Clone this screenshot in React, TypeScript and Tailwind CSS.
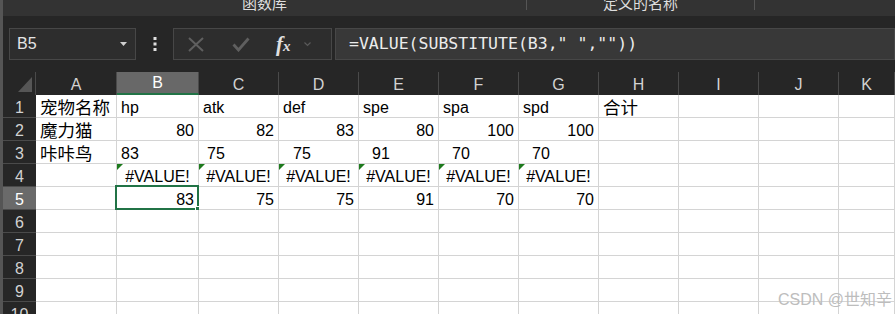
import React from "react";

type Cell = {
  t?: string;
  a?: "l" | "r" | "c";
  cjk?: boolean;
  tri?: boolean;
  sel?: boolean;
  pad?: string;
};

const COLS = ["A", "B", "C", "D", "E", "F", "G", "H", "I", "J", "K"];

const r = (t: string): Cell => ({ t, a: "r" });
const err = (): Cell => ({ t: "#VALUE!", a: "c", tri: true });

const ROWS: Cell[][] = [
  [
    { t: "宠物名称", cjk: true },
    { t: "hp" },
    { t: "atk" },
    { t: "def" },
    { t: "spe" },
    { t: "spa" },
    { t: "spd" },
    { t: "合计", cjk: true },
  ],
  [{ t: "魔力猫", cjk: true }, r("80"), r("82"), r("83"), r("80"), r("100"), r("100")],
  [
    { t: "咔咔鸟", cjk: true },
    { t: "83" },
    { t: "75", pad: "pl-[8px]" },
    { t: "75", pad: "pl-[14px]" },
    { t: "91", pad: "pl-[13px]" },
    { t: "70", pad: "pl-[13px]" },
    { t: "70", pad: "pl-[13px]" },
  ],
  [{}, err(), err(), err(), err(), err(), err()],
  [{}, { t: "83", a: "r", sel: true }, r("75"), r("75"), r("91"), r("70"), r("70")],
  [],
  [],
  [],
  [],
  [],
];

function SheetCell({ c }: { c: Cell }) {
  const justify =
    c.a === "r" ? "justify-end" : c.a === "c" ? "justify-center" : "justify-start";
  return (
    <div
      className={`relative flex items-end ${justify} h-[23px] border-r border-b border-[#d4d4d4] bg-white px-[4px] ${c.pad ?? ""} text-[16px] leading-[18px] text-black whitespace-nowrap`}
    >
      {c.tri && (
        <div className="absolute top-0 left-0 w-0 h-0 border-t-[6px] border-r-[6px] border-t-[#1d7a1d] border-r-transparent" />
      )}
      {c.t && <span className={c.cjk ? "text-[17.5px]" : ""}>{c.t}</span>}
      {c.sel && (
        <>
          <div className="absolute -top-[2px] -left-[2px] -right-[1px] -bottom-[1px] border-2 border-[#217346]" />
          <div className="absolute -right-[4px] -bottom-[4px] w-[7px] h-[7px] bg-[#217346] border border-white" />
        </>
      )}
    </div>
  );
}

export default function App() {
  return (
    <div className="relative w-[895px] h-[314px] overflow-hidden bg-[#262626] border-l-[3px] border-[#555555] font-['Liberation_Sans','Noto_Sans_CJK_SC',sans-serif]">
      {/* ribbon group labels, cut off at the top */}
      <div className="flex h-[16px] bg-[#333333] overflow-hidden text-[15px] text-[#dedede] font-['Noto_Sans_CJK_SC',sans-serif]">
        <div className="w-[523px] flex justify-center">
          <span className="block leading-[15px] -mt-[5px]">函数库</span>
        </div>
        <div className="w-px h-[10px] bg-[#555555]" />
        <div className="w-[227px] flex justify-center">
          <span className="block leading-[15px] -mt-[5px]">定义的名称</span>
        </div>
        <div className="w-px h-[10px] bg-[#555555]" />
      </div>

      {/* formula bar */}
      <div className="flex items-stretch h-[32px] mt-[12px]">
        <div className="ml-[6px] w-[127px] flex items-center justify-between border border-[#474747] bg-[#2d2d2d] pl-[7px] pr-[8px] text-[16px] text-[#e4e4e4]">
          <span>B5</span>
          <svg width="7" height="4" viewBox="0 0 7 4">
            <path d="M0 0h7L3.5 4z" fill="#d0d0d0" />
          </svg>
        </div>
        <div className="w-[37px] flex items-center justify-center">
          <svg width="4" height="14" viewBox="0 0 4 14">
            <rect x="0.5" y="0" width="3" height="3" fill="#e0e0e0" />
            <rect x="0.5" y="5.5" width="3" height="3" fill="#e0e0e0" />
            <rect x="0.5" y="11" width="3" height="3" fill="#e0e0e0" />
          </svg>
        </div>
        <div className="w-[159px] flex items-center border border-[#474747] bg-[#2d2d2d]">
          <svg className="ml-[14px]" width="16" height="15" viewBox="0 0 16 15">
            <path d="M1 1l14 13M15 1L1 14" stroke="#5f5f5f" strokeWidth="2" fill="none" />
          </svg>
          <svg className="ml-[28px]" width="18" height="15" viewBox="0 0 18 15">
            <path d="M1.5 7.5l5 5.5L16.5 1.5" stroke="#5f5f5f" strokeWidth="2.8" fill="none" />
          </svg>
          <span className="ml-[26px] w-[20px] font-['Liberation_Serif',serif] italic font-bold text-[21px] leading-none text-[#e0e0e0]">
            f<span className="text-[15px]">x</span>
          </span>
          <svg className="ml-[8px]" width="7" height="5" viewBox="0 0 7 5">
            <path d="M0.5 0.5l3 3 3-3" stroke="#5a5a5a" strokeWidth="1.2" fill="none" />
          </svg>
        </div>
        <div className="ml-[3px] flex-1 flex items-center border border-[#474747] bg-[#383838] pl-[13px] font-['DejaVu_Sans_Mono',monospace] text-[16.5px] text-[#ececec] whitespace-pre">
          =VALUE(SUBSTITUTE(B3," ",""))
        </div>
      </div>

      {/* sheet */}
      <div className="mt-[12px] grid grid-cols-[33px_81px_82px_80px_80px_80px_80px_80px_80px_80px_80px_56px]">
        <div className="h-[23px] border-r border-[#4a4a4a] flex items-end justify-end pr-[3px] pb-[3px]">
          <svg width="14" height="15" viewBox="0 0 14 15">
            <path d="M14 0v15H0z" fill="#565656" />
          </svg>
        </div>
        {COLS.map((c) => (
          <div
            key={c}
            className={`h-[23px] flex items-end justify-center pb-[1px] border-r border-[#4a4a4a] text-[16px] leading-[18px] ${
              c === "B"
                ? "bg-[#686868] border-b-2 border-b-[#217346] text-white"
                : "bg-[#262626] text-[#d2d2d2]"
            }`}
          >
            {c}
          </div>
        ))}

        {ROWS.map((row, i) => (
          <React.Fragment key={i}>
            <div
              className={`h-[23px] flex items-end justify-center border-b border-[#4a4a4a] text-[16px] leading-[18px] ${
                i === 4 ? "bg-[#6a6a6a] text-white" : "bg-[#262626] text-[#d2d2d2]"
              }`}
            >
              {i + 1}
            </div>
            {COLS.map((_, j) => (
              <SheetCell key={j} c={row[j] ?? {}} />
            ))}
          </React.Fragment>
        ))}
      </div>

      <div className="absolute right-[3px] bottom-[6px] text-[16px] leading-none text-[#bdbdbd] font-['Liberation_Sans','Noto_Sans_CJK_SC',sans-serif]">
        CSDN @世知辛
      </div>
    </div>
  );
}
